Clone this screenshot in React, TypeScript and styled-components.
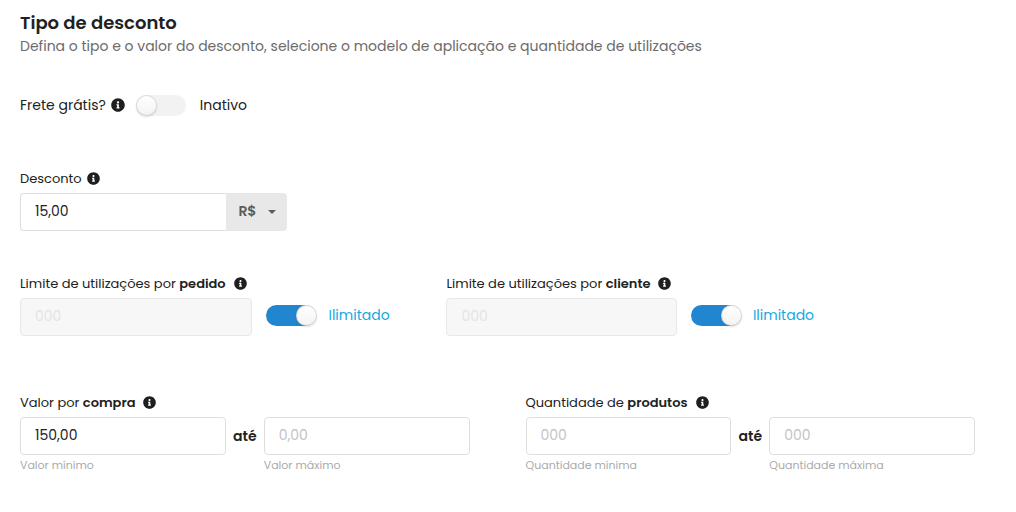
import React, { useState } from "react";
import styled, { createGlobalStyle } from "styled-components";
import { FaInfoCircle } from "react-icons/fa";

const GlobalStyle = createGlobalStyle`
  *, *::before, *::after { box-sizing: border-box; }
  body {
    margin: 0;
    background: #fff;
    color: #212121;
    font-family: Poppins, Inter, sans-serif;
    font-size: 14px;
  }
`;

const Page = styled.main`
  padding: 10px 41px 32px 20px;
`;

const Title = styled.h1`
  margin: 0;
  font-size: 18px;
  font-weight: 600;
  line-height: 26px;
`;

const Subtitle = styled.p`
  margin: 0;
  font-size: 14px;
  line-height: 20px;
  color: #6b6b6b;
`;

const ShippingRow = styled.div`
  display: flex;
  align-items: center;
  margin-top: 38px;
  min-height: 22px;
`;

const ShippingLabel = styled.label`
  font-size: 14px;
  line-height: 20px;
`;

const ShippingToggle = styled.span`
  display: flex;
  margin: 0 14px 0 11px;
`;

const InfoIcon = styled(FaInfoCircle)<{ $gap: number; $size: number }>`
  flex: none;
  width: ${(p) => p.$size}px;
  height: ${(p) => p.$size}px;
  margin-left: ${(p) => p.$gap}px;
  color: #1f1f1f;
`;

const Switch = styled.input.attrs({ type: "checkbox", role: "switch" })`
  appearance: none;
  flex: none;
  display: block;
  width: 50px;
  height: 21px;
  margin: 0;
  border-radius: 11px;
  background: #f2f2f2;
  cursor: pointer;

  &::before {
    content: "";
    display: block;
    width: 21px;
    height: 21px;
    border-radius: 50%;
    background: linear-gradient(#fff, #f3f3f3);
    box-shadow: 0 1px 2px rgba(34, 36, 38, 0.15),
      inset 0 0 0 1px rgba(34, 36, 38, 0.15);
  }

  &:checked {
    background: #2185d0;
  }

  &:checked::before {
    margin-left: 30px;
  }
`;

const Fieldset = styled.fieldset`
  min-width: 0;
  margin: 0;
  padding: 0;
  border: 0;
`;

const Discount = styled(Fieldset)`
  width: 28%;
  min-width: 240px;
  margin-top: 52px;
`;

const LimitGrid = styled.div`
  display: grid;
  grid-template-columns: 185fr 184fr 52fr;
  column-gap: 56px;
  margin-top: 42px;
`;

const RangeGrid = styled.div`
  display: grid;
  grid-template-columns: 1fr 1fr;
  column-gap: 56px;
  margin-top: 56px;
`;

const Caption = styled.div`
  display: flex;
  align-items: center;
  height: 20px;
  margin-bottom: 5px;
  font-size: 13px;
  line-height: 20px;
  white-space: nowrap;

  label {
    padding-top: 2px;
  }
`;

const Strong = styled.strong`
  font-weight: 600;
`;

const TextInput = styled.input.attrs({ type: "text" })`
  flex: 1;
  width: 100%;
  min-width: 0;
  height: 38px;
  padding: 0 14px 2px;
  border: 1px solid #dededf;
  border-radius: 4px;
  background: #fff;
  color: #212121;
  font: inherit;

  &::placeholder {
    color: #c3c3c3;
    opacity: 1;
  }

  &:disabled {
    border-color: #e8e8e8;
    background: #f7f7f7;
  }

  &:disabled::placeholder {
    color: #e4e4e4;
  }
`;

const Row = styled.div`
  display: flex;
  align-items: center;
`;

const AmountInput = styled(TextInput)`
  border-right: 0;
  border-radius: 4px 0 0 4px;
`;

const UnitBox = styled.div`
  position: relative;
  flex: none;
  width: 61px;
  height: 38px;
  color: #5c5c5c;
`;

const UnitSelect = styled.select`
  appearance: none;
  width: 100%;
  height: 100%;
  padding: 0 24px 2px 12px;
  border: 0;
  border-radius: 0 4px 4px 0;
  background: #e8e8e8;
  color: inherit;
  font: inherit;
  font-weight: 600;
`;

const Caret = styled.svg`
  position: absolute;
  top: 17px;
  right: 11px;
  width: 8px;
  height: 4px;
  pointer-events: none;
`;

const SwitchText = styled.label`
  width: 62px;
  margin-left: 12px;
  color: #14a9e2;
  font-size: 14px;
  line-height: 20px;
  white-space: nowrap;
`;

const LimitSwitch = styled.span`
  display: flex;
  margin: 0 0 3px 14px;
`;

const LimitRow = styled(Row)`
  ${SwitchText} {
    margin-bottom: 4px;
  }
`;

const RangeRow = styled.div`
  display: grid;
  grid-template-columns: 1fr 38px 1fr;
  align-items: center;
`;

const Until = styled.span`
  font-weight: 600;
  line-height: 20px;
  text-align: center;
`;

const Hint = styled.label`
  margin-top: 2px;
  color: #aaa;
  font-size: 11px;
  line-height: 16px;
  white-space: nowrap;
`;

type LimitProps = { id: string; target: string };

function LimitField({ id, target }: LimitProps) {
  const [unlimited, setUnlimited] = useState(true);
  return (
    <Fieldset>
      <Caption>
        <label htmlFor={id}>
          Limite de utilizações por <Strong>{target}</Strong>
        </label>
        <InfoIcon $gap={8} $size={13} aria-hidden />
      </Caption>
      <LimitRow>
        <TextInput id={id} placeholder="000" disabled={unlimited} />
        <LimitSwitch>
          <Switch
            id={`${id}-switch`}
            checked={unlimited}
            onChange={(e) => setUnlimited(e.target.checked)}
          />
        </LimitSwitch>
        <SwitchText htmlFor={`${id}-switch`}>
          {unlimited ? "Ilimitado" : "Limitado"}
        </SwitchText>
      </LimitRow>
    </Fieldset>
  );
}

type RangeProps = {
  id: string;
  caption: string;
  subject: string;
  minHint: string;
  maxHint: string;
  minValue?: string;
  placeholder: string;
};

function RangeField(p: RangeProps) {
  return (
    <Fieldset>
      <Caption>
        <label htmlFor={`${p.id}-min`}>
          {p.caption} <Strong>{p.subject}</Strong>
        </label>
        <InfoIcon $gap={8} $size={13} aria-hidden />
      </Caption>
      <RangeRow>
        <TextInput
          id={`${p.id}-min`}
          defaultValue={p.minValue}
          placeholder={p.placeholder}
        />
        <Until>até</Until>
        <TextInput id={`${p.id}-max`} placeholder={p.placeholder} />
        <Hint htmlFor={`${p.id}-min`}>{p.minHint}</Hint>
        <span />
        <Hint htmlFor={`${p.id}-max`}>{p.maxHint}</Hint>
      </RangeRow>
    </Fieldset>
  );
}

export default function App() {
  const [freeShipping, setFreeShipping] = useState(false);
  return (
    <>
      <GlobalStyle />
      <Page>
        <Title>Tipo de desconto</Title>
        <Subtitle>
          Defina o tipo e o valor do desconto, selecione o modelo de aplicação e
          quantidade de utilizações
        </Subtitle>

        <ShippingRow>
          <ShippingLabel htmlFor="shipping">Frete grátis?</ShippingLabel>
          <InfoIcon $gap={5} $size={14} aria-hidden />
          <ShippingToggle>
            <Switch
              id="shipping"
              checked={freeShipping}
              onChange={(e) => setFreeShipping(e.target.checked)}
            />
          </ShippingToggle>
          <ShippingLabel htmlFor="shipping">
            {freeShipping ? "Ativo" : "Inativo"}
          </ShippingLabel>
        </ShippingRow>

        <Discount>
          <Caption>
            <label htmlFor="discount">Desconto</label>
            <InfoIcon $gap={5} $size={13} aria-hidden />
          </Caption>
          <Row>
            <AmountInput id="discount" defaultValue="15,00" />
            <UnitBox>
              <UnitSelect aria-label="Unidade do desconto" defaultValue="R$">
                <option>R$</option>
                <option>%</option>
              </UnitSelect>
              <Caret viewBox="0 0 8 4" aria-hidden>
                <path d="M0 0h8L4 4z" fill="currentColor" />
              </Caret>
            </UnitBox>
          </Row>
        </Discount>

        <LimitGrid>
          <LimitField id="order-limit" target="pedido" />
          <LimitField id="customer-limit" target="cliente" />
        </LimitGrid>

        <RangeGrid>
          <RangeField
            id="purchase"
            caption="Valor por"
            subject="compra"
            minHint="Valor mínimo"
            maxHint="Valor máximo"
            minValue="150,00"
            placeholder="0,00"
          />
          <RangeField
            id="products"
            caption="Quantidade de"
            subject="produtos"
            minHint="Quantidade mínima"
            maxHint="Quantidade máxima"
            placeholder="000"
          />
        </RangeGrid>
      </Page>
    </>
  );
}
